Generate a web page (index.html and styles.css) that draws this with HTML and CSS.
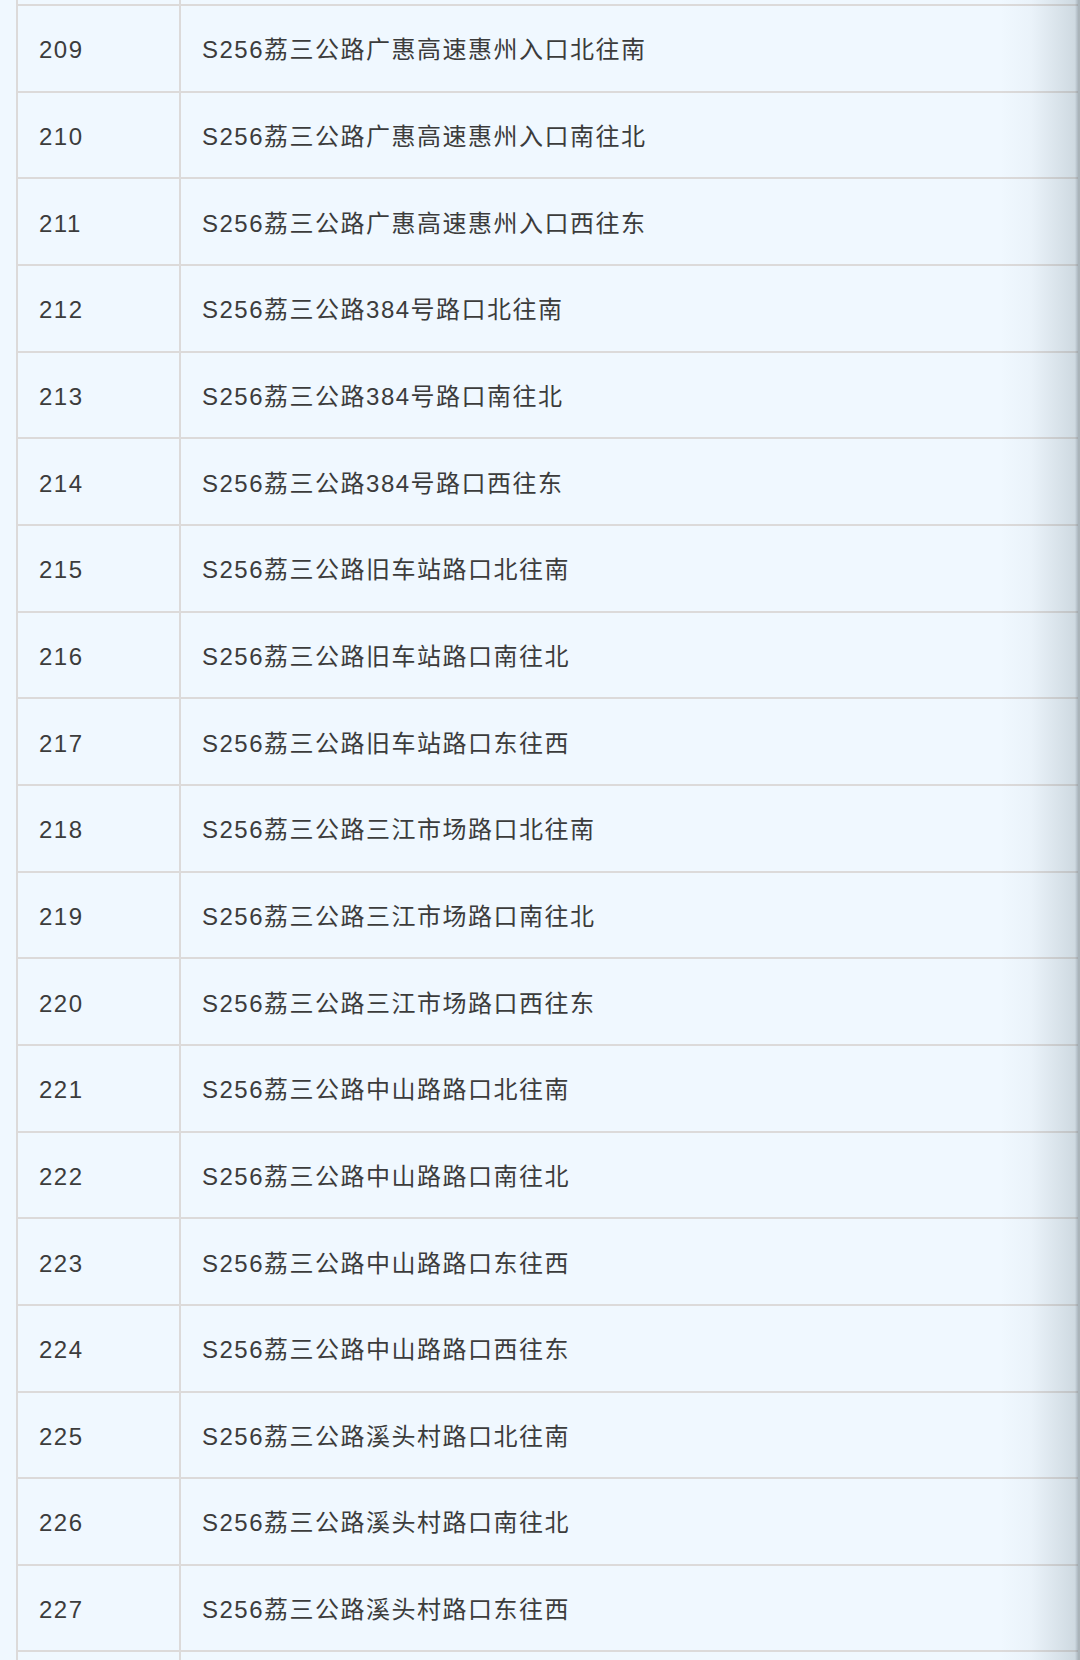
FILE: index.html
```html
<!DOCTYPE html>
<html lang="zh-CN">
<head>
<meta charset="utf-8">
<title>路口列表</title>
<link rel="stylesheet" href="styles.css">
</head>
<body>
<div class="frame">
  <div class="table">
    <div class="row"><div class="cell num"></div><div class="cell name"></div></div>
    <div class="row"><div class="cell num">209</div><div class="cell name">S256荔三公路广惠高速惠州入口北往南</div></div>
    <div class="row"><div class="cell num">210</div><div class="cell name">S256荔三公路广惠高速惠州入口南往北</div></div>
    <div class="row"><div class="cell num">211</div><div class="cell name">S256荔三公路广惠高速惠州入口西往东</div></div>
    <div class="row"><div class="cell num">212</div><div class="cell name">S256荔三公路384号路口北往南</div></div>
    <div class="row"><div class="cell num">213</div><div class="cell name">S256荔三公路384号路口南往北</div></div>
    <div class="row"><div class="cell num">214</div><div class="cell name">S256荔三公路384号路口西往东</div></div>
    <div class="row"><div class="cell num">215</div><div class="cell name">S256荔三公路旧车站路口北往南</div></div>
    <div class="row"><div class="cell num">216</div><div class="cell name">S256荔三公路旧车站路口南往北</div></div>
    <div class="row"><div class="cell num">217</div><div class="cell name">S256荔三公路旧车站路口东往西</div></div>
    <div class="row"><div class="cell num">218</div><div class="cell name">S256荔三公路三江市场路口北往南</div></div>
    <div class="row"><div class="cell num">219</div><div class="cell name">S256荔三公路三江市场路口南往北</div></div>
    <div class="row"><div class="cell num">220</div><div class="cell name">S256荔三公路三江市场路口西往东</div></div>
    <div class="row"><div class="cell num">221</div><div class="cell name">S256荔三公路中山路路口北往南</div></div>
    <div class="row"><div class="cell num">222</div><div class="cell name">S256荔三公路中山路路口南往北</div></div>
    <div class="row"><div class="cell num">223</div><div class="cell name">S256荔三公路中山路路口东往西</div></div>
    <div class="row"><div class="cell num">224</div><div class="cell name">S256荔三公路中山路路口西往东</div></div>
    <div class="row"><div class="cell num">225</div><div class="cell name">S256荔三公路溪头村路口北往南</div></div>
    <div class="row"><div class="cell num">226</div><div class="cell name">S256荔三公路溪头村路口南往北</div></div>
    <div class="row"><div class="cell num">227</div><div class="cell name">S256荔三公路溪头村路口东往西</div></div>
    <div class="row"><div class="cell num"></div><div class="cell name"></div></div>
  </div>
  <div class="edge-shadow"></div>
</div>
</body>
</html>
```

FILE: styles.css
```css
html, body {
  margin: 0;
  padding: 0;
  background: #f0f8ff;
  overflow: hidden;
}

body {
  width: 1080px;
  height: 1660px;
  font-family: "Liberation Sans", "Noto Sans CJK SC", sans-serif;
  color: #3c3c3c;
}

.frame {
  position: relative;
  height: 1660px;
  overflow: hidden;
}

.table {
  margin-top: -80.67px;
  margin-left: 16px;
  border-left: 2px solid #dcdada;
}

.row {
  display: grid;
  grid-template-columns: 163px 1fr;
  height: 86.67px;
  box-sizing: border-box;
  border-bottom: 2px solid #dcdada;
}

.cell {
  display: flex;
  align-items: center;
  font-size: 24px;
  line-height: 30px;
  letter-spacing: 1.5px;
  padding-top: 4px;
  box-sizing: border-box;
}

.num {
  padding-left: 21px;
  border-right: 2px solid #dcdada;
}

.name {
  padding-left: 21px;
}

.edge-shadow {
  position: absolute;
  top: 0;
  right: 0;
  width: 80px;
  height: 100%;
  background: linear-gradient(to right, rgba(120, 140, 150, 0) 0%, rgba(120, 140, 150, 0.05) 40%, rgba(100, 120, 130, 0.24) 96%, rgba(90, 105, 115, 0.45) 100%);
  border-right: 2px solid #aab4ba;
  box-sizing: border-box;
}
```
